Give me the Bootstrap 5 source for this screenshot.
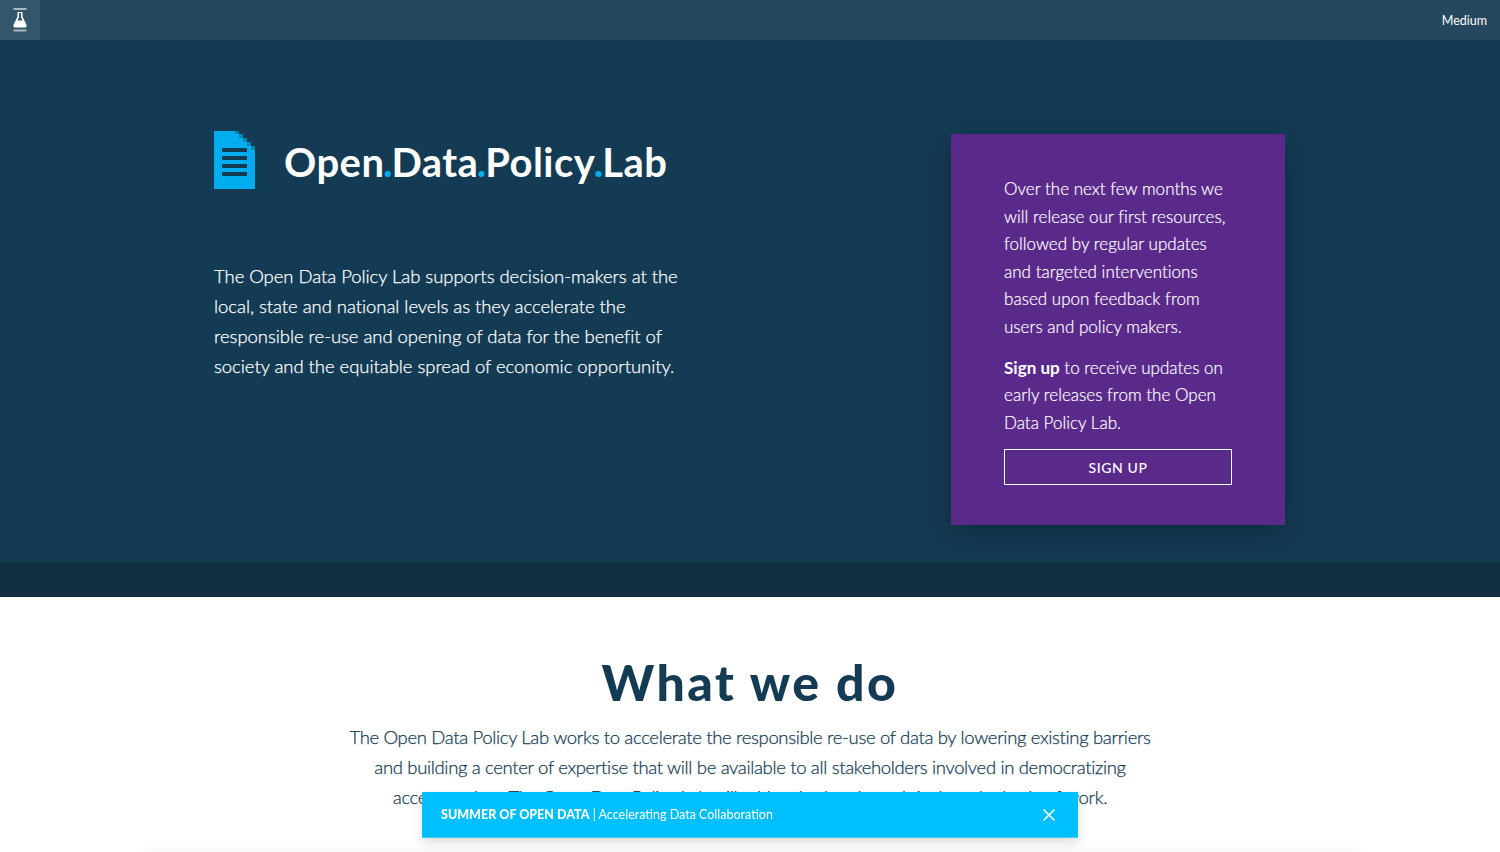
<!DOCTYPE html>
<html lang="en">
  <head>
    <meta charset="UTF-8" />
    <title>Open Data Policy Lab</title>
    <link href="https://cdn.jsdelivr.net/npm/bootstrap@5.3.0/dist/css/bootstrap.min.css" rel="stylesheet" />
    <style>
      html, body { height: 852px; overflow: hidden; }
      body { font-family: "Lato", sans-serif; font-weight: 400; color: #143b54; background: #fff; }
      .topbar { height: 40px; background: #25485e; }
      .lab-box { width: 40px; height: 40px; background: #33566b; }
      .medium-link { font-size: 12.500px; font-weight: 400; color: #fff; margin-right: 13px; margin-top: 2px; text-decoration: none; }
      .hero { height: 522px; background: #143b54; padding: 91px 0 0 214px; color: #fff; }
      .hero-left { width: 737px; }
      .logo-row { height: 58px; gap: 29px; }
      .logo-name { font-size: 40px; font-weight: 700; line-height: 1; letter-spacing: .45px; margin-top: 4px; }
      .logo-name span { color: #00aeef; margin: 0 -1.500px; }
      .hero-text { width: 470px; margin-top: 72px; font-size: 18.500px; font-weight: 300; line-height: 30px; letter-spacing: -.05px; -webkit-text-stroke: .25px #fff; }
      .signup-box { width: 334px; height: 391px; margin-top: 3px; padding: 41px 53px; background: #5a2a8b; box-shadow: 0 8px 28px rgba(0, 0, 0, .28); font-size: 17px; font-weight: 300; line-height: 27.500px; letter-spacing: .02px; -webkit-text-stroke: .2px #fff; }
      .signup-box p { margin-bottom: 13.500px; }
      .signup-box b { font-weight: 700; -webkit-text-stroke: 0; }
      .signup-btn { display: block; width: 228px; height: 36px; padding: 0; margin-top: 13px; border: 1px solid #fff; border-radius: 0; color: #fff; font-size: 14px; font-weight: 500; line-height: 35px; letter-spacing: .6px; text-align: center; -webkit-text-stroke: 0; }
      .signup-btn:hover { color: #fff; background: transparent; }
      .hero-strip { height: 35px; background: #112f40; }
      .about { padding-top: 53px; text-align: center; }
      .about h1 { margin: 0 0 8px; font-size: 50px; font-weight: 900; line-height: 64px; letter-spacing: 2.500px; color: #143b54; }
      .about p { margin: 0; font-size: 18.500px; font-weight: 300; line-height: 30px; letter-spacing: -.34px; -webkit-text-stroke: .25px #143b54; }
      .next-panel { width: 1220px; height: 40px; margin: 40px auto 0; box-shadow: 0 0 12px rgba(0, 0, 0, .05); }
      .notice { position: fixed; left: 422px; bottom: 14px; width: 656px; height: 46px; padding: 1px 19px 0; background: #00bfff; border-bottom: 1px solid #3dcfff; color: #fff; font-size: 12.500px; font-weight: 400; box-shadow: 0 4px 10px rgba(0, 0, 0, .15); }
      .notice b { font-weight: 900; }
      .notice-close { width: 14px; height: 14px; margin-right: 3px; padding: 0; border: 0; background: none; line-height: 0; }
    </style>
  </head>
  <body>
    <nav class="topbar d-flex justify-content-between align-items-center">
      <div class="lab-box d-flex align-items-center justify-content-center">
        <svg width="16" height="26" viewBox="0 0 16 26">
          <rect x="1.500" y="1" width="13" height="2" fill="#a9bac5" />
          <rect x="1.500" y="22.500" width="13" height="2" fill="#a9bac5" />
          <path d="M5.500 5h5v4.500l4 8.500c.6 1.400 0 2.500-1.500 2.500H3c-1.500 0-2.100-1.100-1.500-2.500l4-8.500z" fill="#fff" />
          <path d="M7 6h2v4l1.500 3.500h-5L7 10z" fill="#33566b" />
        </svg>
      </div>
      <a href="#" class="medium-link">Medium</a>
    </nav>

    <section class="hero d-flex">
      <div class="hero-left">
        <div class="logo-row d-flex align-items-center">
          <svg width="41" height="58" viewBox="0 0 41 58" shape-rendering="crispEdges">
            <path d="M0 0h21v3h4v4h4v4h4v4h4v4h4v39H0z" fill="#00aeef" />
            <path d="M21 0h4v3h4v4h4v4h4v4h4v4h-4v-4h-4v-4h-4V7h-4V3h-4z" fill="#0a86b6" />
            <g fill="#143b54">
              <rect x="8" y="17" width="25" height="4" />
              <rect x="8" y="25" width="25" height="4" />
              <rect x="8" y="33" width="25" height="4" />
              <rect x="8" y="41" width="25" height="4" />
            </g>
          </svg>
          <div class="logo-name">Open<span>.</span>Data<span>.</span>Policy<span>.</span>Lab</div>
        </div>
        <p class="hero-text">The Open Data Policy Lab supports decision-makers at the local, state and national levels as they accelerate the responsible re-use and opening of data for the benefit of society and the equitable spread of economic opportunity.</p>
      </div>
      <div class="signup-box">
        <p>Over the next few months we will release our first resources, followed by regular updates and targeted interventions based upon feedback from users and policy makers.</p>
        <p class="mb-0"><b>Sign up</b> to receive updates on early releases from the Open Data Policy Lab.</p>
        <a href="#" class="btn signup-btn">SIGN UP</a>
      </div>
    </section>
    <div class="hero-strip"></div>

    <section class="about">
      <h1>What we do</h1>
      <p>The Open Data Policy Lab works to accelerate the responsible re-use of data by lowering existing barriers<br />and building a center of expertise that will be available to all stakeholders involved in democratizing<br />access to data. The Open Data Policy Lab will add real value through its broader body of work.</p>
      <div class="next-panel"></div>
    </section>

    <div class="notice d-flex justify-content-between align-items-center">
      <div><b>SUMMER OF OPEN DATA</b> | Accelerating Data Collaboration</div>
      <button type="button" class="notice-close" aria-label="Close">
        <svg width="14" height="14" viewBox="0 0 14 14"><path d="M1.500 1.500l11 11M12.500 1.500l-11 11" stroke="#fff" stroke-width="1.500" fill="none" /></svg>
      </button>
    </div>

    <script src="https://cdn.jsdelivr.net/npm/bootstrap@5.3.0/dist/js/bootstrap.bundle.min.js"></script>
  </body>
</html>
